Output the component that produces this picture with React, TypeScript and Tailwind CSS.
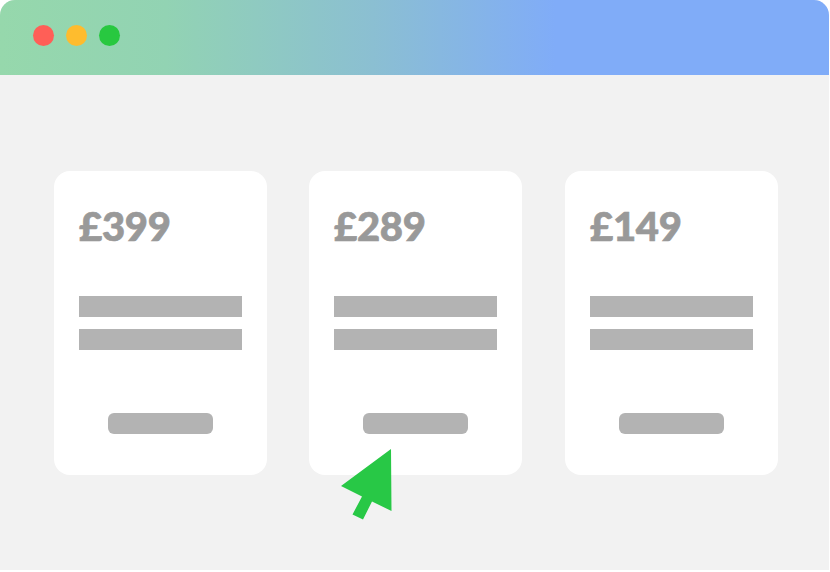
import React from "react";

const prices = ["£399", "£289", "£149"];
const margins = ["mr-[42px]", "mr-[43px]", ""];

function Card({ price, cls }: { price: string; cls: string }) {
  return (
    <div className={"w-[213px] h-[304px] bg-white rounded-[16px] pt-[35px] px-[25px] flex flex-col " + cls}>
      <div
        className="text-[40px] leading-none font-black text-[#999999] tracking-[-0.3px] [-webkit-text-stroke:0.7px_#999999]"
        style={{ fontFamily: "Lato, 'Noto Sans', sans-serif" }}
      >
        {price}
      </div>
      <div className="mt-[50px] flex flex-col gap-[12px]">
        <div className="w-[163px] h-[21px] bg-[#b3b3b3]" />
        <div className="w-[163px] h-[21px] bg-[#b3b3b3]" />
      </div>
      <div className="mt-[63px] flex justify-center -mx-[25px]">
        <div className="w-[105px] h-[21px] rounded-[6px] bg-[#b3b3b3]" />
      </div>
    </div>
  );
}

export default function App() {
  return (
    <div className="w-[830px] h-[572px] bg-white">
      <div className="relative w-[829px] h-[570px] bg-[#f2f2f2] rounded-t-[15px] overflow-hidden">
        <div className="h-[75px] bg-[linear-gradient(90deg,#96d8ac_0%,#92d3b3_20%,#8bbfd2_45%,#80acf8_67%,#80acf8_100%)] flex items-center gap-[12px] pl-[33px] pb-[5px]">
          <div className="w-[21px] h-[21px] rounded-full bg-[#ff5f57]" />
          <div className="w-[21px] h-[21px] rounded-full bg-[#febc2e]" />
          <div className="w-[21px] h-[21px] rounded-full bg-[#28c840]" />
        </div>
        <div className="flex pl-[54px] pt-[96px]">
          {prices.map((p, i) => (
            <Card key={p} price={p} cls={margins[i]} />
          ))}
        </div>
        <svg
          className="absolute left-0 top-0"
          width="830"
          height="572"
          viewBox="0 0 830 572"
        >
          <polygon
            points="391,449 391.5,511 372,501.5 363,519.5 352.5,514.5 362,496.5 341,486"
            fill="#28c846"
          />
        </svg>
      </div>
    </div>
  );
}
